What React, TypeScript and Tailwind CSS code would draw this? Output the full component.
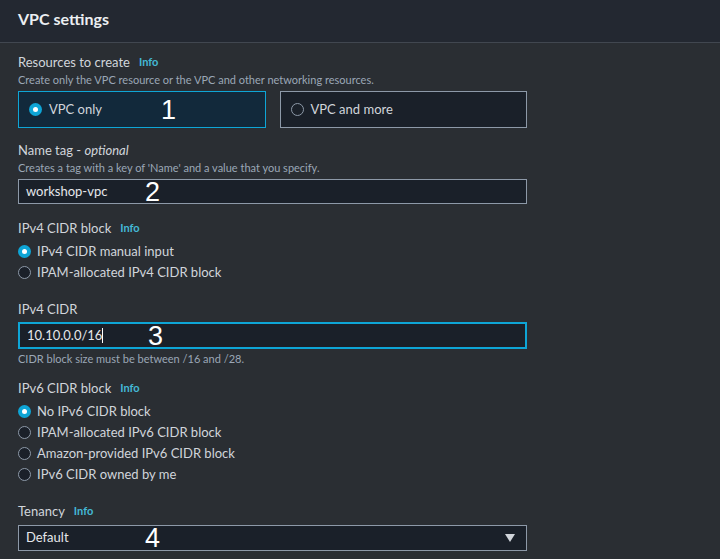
import { ReactNode } from 'react'

const Info = () => (
    <span className="ml-[9px] text-[11px] font-bold text-[#44b9d6]">Info</span>
)

const Radio = ({ checked }: { checked?: boolean }) =>
    checked ? (
        <span className="w-[13px] h-[13px] rounded-full bg-[#0ea5d6] flex items-center justify-center shrink-0">
            <span className="w-[5px] h-[5px] rounded-full bg-white"></span>
        </span>
    ) : (
        <span className="w-[13px] h-[13px] rounded-full border border-[#8d99a8] bg-[#1a2029] shrink-0"></span>
    )

// big white step numbers drawn over the form
const Mark = ({ n, left }: { n: string; left: string }) => (
    <span className={`absolute top-1/2 -translate-y-1/2 text-[27px] leading-none text-white font-['Liberation_Sans',sans-serif] ${left}`}>
        {n}
    </span>
)

const Field = ({ label, desc, children, className = '' }: { label: ReactNode; desc?: string; children: ReactNode; className?: string }) => (
    <div className={className}>
        <div className="text-[13px] text-[#d1d5db] leading-[18px] flex items-center">{label}</div>
        {desc && <div className="text-[11px] text-[#9ba7b6] leading-[16px] mt-px">{desc}</div>}
        {children}
    </div>
)

const Option = ({ checked, text }: { checked?: boolean; text: string }) => (
    <div className="flex items-center gap-[6px] h-[21px] text-[13px] text-[#d1d5db]">
        <Radio checked={checked} />
        <span>{text}</span>
    </div>
)

const App = () => {
    return (
        <div className="w-[720px] h-[559px] overflow-hidden bg-[#2a2e33] font-['Lato',sans-serif]">
            <div className="h-[43px] bg-[#232831] border-b border-[#414750] flex items-center px-[18px] pb-[5px]">
                <h2 className="text-[16px] font-bold text-[#eceff2]">VPC settings</h2>
            </div>

            <div className="px-[18px] pt-[10px] w-[545px]">
                <Field label={<>Resources to create<Info /></>} desc="Create only the VPC resource or the VPC and other networking resources.">
                    <div className="grid grid-cols-2 gap-[14px] mt-[3px]">
                        <div className="relative h-[37px] border border-[#0ea5d6] bg-[#12293b] flex items-center gap-[7px] px-[10px] text-[13px] text-[#d1d5db]">
                            <Radio checked />
                            <span>VPC only</span>
                            <Mark n="1" left="left-[142px]" />
                        </div>
                        <div className="h-[37px] border border-[#8d99a8] bg-[#1a2029] flex items-center gap-[7px] px-[10px] text-[13px] text-[#d1d5db]">
                            <Radio />
                            <span>VPC and more</span>
                        </div>
                    </div>
                </Field>

                <Field className="mt-[13px]" label={<>Name tag -&nbsp;<i>optional</i></>} desc="Creates a tag with a key of 'Name' and a value that you specify.">
                    <div className="relative h-[25px] mt-[3px] border border-[#8d99a8] bg-[#1a2029] flex items-center px-[7px] text-[13px] text-[#e5e7eb]">
                        workshop-vpc
                        <Mark n="2" left="left-[126px]" />
                    </div>
                </Field>

                <Field className="mt-[15px]" label={<>IPv4 CIDR block<Info /></>}>
                    <div className="mt-[4px]">
                        <Option checked text="IPv4 CIDR manual input" />
                        <Option text="IPAM-allocated IPv4 CIDR block" />
                    </div>
                </Field>

                <Field className="mt-[17px]" label="IPv4 CIDR">
                    <div className="relative h-[27px] mt-[4px] border-2 border-[#0ea5d6] bg-[#1a2029] flex items-center px-[7px] text-[13px] text-[#e5e7eb]">
                        10.10.0.0/16<span className="w-px h-[15px] bg-white"></span>
                        <Mark n="3" left="left-[128px]" />
                    </div>
                    <div className="text-[11px] text-[#9ba7b6] leading-[16px] mt-[2px]">CIDR block size must be between /16 and /28.</div>
                </Field>

                <Field className="mt-[12px]" label={<>IPv6 CIDR block<Info /></>}>
                    <div className="mt-[4px]">
                        <Option checked text="No IPv6 CIDR block" />
                        <Option text="IPAM-allocated IPv6 CIDR block" />
                        <Option text="Amazon-provided IPv6 CIDR block" />
                        <Option text="IPv6 CIDR owned by me" />
                    </div>
                </Field>

                <Field className="mt-[17px]" label={<>Tenancy<Info /></>}>
                    <div className="relative h-[26px] mt-[5px] border border-[#8d99a8] bg-[#1a2029] flex items-center justify-between px-[7px] text-[13px] text-[#e5e7eb]">
                        <span>Default</span>
                        <svg width="10" height="8" viewBox="0 0 10 8" className="mr-[4px]">
                            <path d="M0 0 L10 0 L5 8 Z" fill="#d1d5db" />
                        </svg>
                        <Mark n="4" left="left-[126px]" />
                    </div>
                </Field>
            </div>
        </div>
    )
}

export default App
